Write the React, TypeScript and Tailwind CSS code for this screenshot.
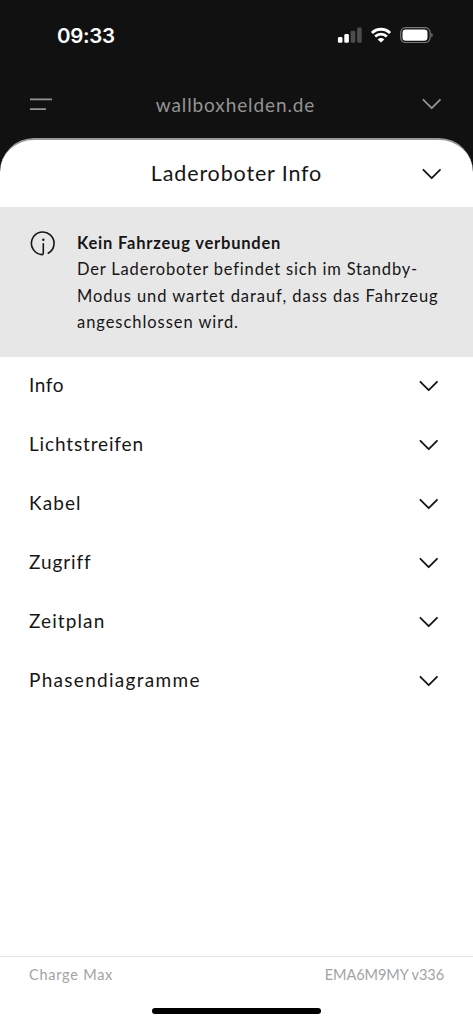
import clsx from "clsx";

type Section = {
  title: string;
  tracking: string;
};

const sections: Section[] = [
  { title: "Info", tracking: "tracking-[0.6px]" },
  { title: "Lichtstreifen", tracking: "tracking-[0.85px]" },
  { title: "Kabel", tracking: "tracking-[1.1px]" },
  { title: "Zugriff", tracking: "tracking-[0.9px]" },
  { title: "Zeitplan", tracking: "tracking-[1.1px]" },
  { title: "Phasendiagramme", tracking: "tracking-[1.3px]" },
];

function Chevron({ className }: { className?: string }) {
  return (
    <svg
      viewBox="0 0 20 12"
      className={clsx("h-3 w-5 shrink-0", className)}
      fill="none"
      stroke="currentColor"
      strokeWidth="1.8"
      strokeLinecap="round"
      strokeLinejoin="round"
    >
      <path d="M1.4 1.8 9.7 10.2 18 1.8" />
    </svg>
  );
}

function InfoIcon() {
  return (
    <svg
      viewBox="0 0 26 26"
      className="h-[26px] w-[26px] shrink-0"
      fill="none"
      stroke="currentColor"
      strokeWidth="1.6"
      strokeLinecap="round"
    >
      <path d="M18.2 23.2A11.3 11.3 0 1 0 12.2 24.6q1.1 0 1.1-1.3V13.8" />
      <circle cx="13.3" cy="9.7" r="1.2" fill="currentColor" stroke="none" />
    </svg>
  );
}

function StatusBar() {
  return (
    <div className="flex h-[70px] items-center justify-between pr-[39px] pl-[57px] text-white">
      <span className="pt-[2px] font-['Inter',sans-serif] text-[20.5px] leading-none font-semibold tracking-[-0.3px]">
        09:33
      </span>
      <div className="flex items-center">
        <svg viewBox="0 0 26 16" className="h-4 w-[26px]" fill="currentColor">
          <rect x="0.9" y="10" width="4.6" height="5.8" rx="1.4" />
          <rect x="7.3" y="7" width="4.6" height="8.8" rx="1.4" />
          <rect x="13.7" y="3.8" width="4.6" height="12" rx="1.4" opacity=".25" />
          <rect x="20.1" y="0.4" width="4.6" height="15.4" rx="1.4" opacity=".25" />
        </svg>
        <svg
          viewBox="0 0 22 16"
          className="ml-[7px] h-4 w-[22px]"
          fill="none"
          stroke="currentColor"
          strokeWidth="2.8"
        >
          <path d="M1.9 6a12.9 12.9 0 0 1 18.2 0" />
          <path d="M5.2 9.6a8.2 8.2 0 0 1 11.6 0" />
          <path d="M11 15.6 7.7 12.4a4.7 4.7 0 0 1 6.6 0Z" fill="currentColor" stroke="none" />
        </svg>
        <svg viewBox="0 0 34 16" className="ml-2 h-4 w-[34px]">
          <rect x="0.7" y="0.7" width="29.4" height="14.8" rx="4.8" fill="none" stroke="#77777a" strokeWidth="1.2" />
          <rect x="2.5" y="2.4" width="25" height="11.4" rx="3.3" fill="currentColor" />
          <path d="M31.3 5.7c1.9.8 1.9 3.9 0 4.7Z" fill="#77777a" />
        </svg>
      </div>
    </div>
  );
}

function TopBar() {
  return (
    <div className="flex h-[68px] items-center justify-between pr-[31px] pl-[30px] text-[#949494]">
      <svg viewBox="0 0 22 14" className="h-3.5 w-[22px]" stroke="currentColor" strokeWidth="1.9">
        <path d="M0 2.4h22M0 12.1h16" />
      </svg>
      <span className="pr-[3px] text-[19px] leading-none tracking-[0.9px]">wallboxhelden.de</span>
      <Chevron />
    </div>
  );
}

export default function App() {
  return (
    <div className="flex h-[1024px] w-[473px] flex-col overflow-hidden bg-[#111] font-['Lato',sans-serif] text-[#161616]">
      <StatusBar />
      <TopBar />

      <main className="flex flex-1 flex-col rounded-t-[34px] border-t-2 border-[#999] bg-white">
        <header className="flex h-[67px] items-center justify-between pr-[31px] pl-[31px]">
          <span className="w-5" />
          <h1 className="text-[21.5px] leading-none tracking-[0.85px]">Laderoboter Info</h1>
          <Chevron />
        </header>

        <section className="flex h-[150px] bg-[#e7e7e7] pt-[22px] pl-[30px]">
          <div className="pt-[1px]">
            <InfoIcon />
          </div>
          <div className="ml-[21px] pt-[0.5px] text-[16.5px] leading-[26.5px] whitespace-nowrap">
            <p className="font-bold tracking-[0.8px]">Kein Fahrzeug verbunden</p>
            <p className="tracking-[0.82px]">Der Laderoboter befindet sich im Standby-</p>
            <p className="tracking-[0.95px]">Modus und wartet darauf, dass das Fahrzeug</p>
            <p className="tracking-[0.95px]">angeschlossen wird.</p>
          </div>
        </section>

        <ul className="-mt-px">
          {sections.map((section) => (
            <li key={section.title}>
              <button
                type="button"
                className="flex h-[59px] w-full items-center justify-between pr-[34px] pl-[29px] text-[19px] leading-none"
              >
                <span className={clsx("pb-[3px]", section.tracking)}>{section.title}</span>
                <Chevron />
              </button>
            </li>
          ))}
        </ul>

        <footer className="mt-auto h-[68px] border-t border-[#e4e4e4]">
          <div className="flex h-[36px] items-center justify-between px-[29px] text-[14.5px] leading-none text-[#a3a3a3]">
            <span className="tracking-[0.75px]">Charge Max</span>
            <span className="tracking-[-0.05px]">EMA6M9MY v336</span>
          </div>
          <div className="mx-auto mt-[15px] h-[6px] w-[169px] rounded-full bg-black" />
        </footer>
      </main>
    </div>
  );
}
